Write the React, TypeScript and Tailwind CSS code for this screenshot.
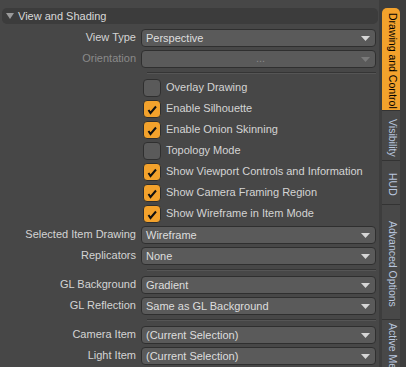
import React from "react";

const font = { fontFamily: '"Liberation Sans", Arial, sans-serif' };

function Arrow({ dim }: { dim?: boolean }) {
    return (
        <svg width="9" height="6" viewBox="0 0 9 6" className="absolute right-[5px] top-[6px]">
            <path d="M0 0 L9 0 L4.5 5 Z" fill={dim ? "#7a7a7a" : "#d6d6d6"} />
        </svg>
    );
}

function Row({ label, children, dim }: { label?: string; children: React.ReactNode; dim?: boolean }) {
    return (
        <div className="flex items-center h-[21px]">
            <div
                className={
                    "w-[139px] pr-[5px] text-right whitespace-nowrap " + (dim ? "text-[#8a8a8a]" : "text-[#d4d4d4]")
                }
            >
                {label}
            </div>
            <div className="flex-1 pr-[2px]">{children}</div>
        </div>
    );
}

function Select({ value, dim }: { value: string; dim?: boolean }) {
    return (
        <div className="relative h-[18px] rounded-[4px] bg-[#5a5a5a] border border-[#2f2f2f] pl-[4px] leading-[16px] text-[#dedede] whitespace-nowrap">
            {dim ? <div className="text-center text-[#8a8a8a] leading-[14px]">...</div> : value}
            <Arrow dim={dim} />
        </div>
    );
}

function Check({ label, on }: { label: string; on?: boolean }) {
    return (
        <div className="flex items-center h-[21px] pl-[141px]">
            <div
                className={
                    "w-[18px] h-[18px] shrink-0 rounded-[4px] border border-[#2f2f2f] flex items-center justify-center " +
                    (on ? "bg-[#f3a22c]" : "bg-[#5a5a5a]")
                }
            >
                {on && (
                    <svg width="12" height="12" viewBox="0 0 12 12">
                        <path d="M2.5 7 L4.5 10 L10 3.5" stroke="#111" strokeWidth="2" fill="none" />
                    </svg>
                )}
            </div>
            <span className="ml-[5px] text-[#d4d4d4] whitespace-nowrap">{label}</span>
        </div>
    );
}

function Sep() {
    return (
        <div className="h-[8px] flex items-center pl-[145px] pr-[2px]">
            <div className="h-[2px] w-full bg-[#353535] border-b border-[#555]" />
        </div>
    );
}

function Tab({ label, active, h }: { label: string; active?: boolean; h: number }) {
    return (
        <div
            className={
                "w-[18px] flex justify-center pt-[4px] border-b border-[#333] text-[10.5px] whitespace-nowrap overflow-hidden [writing-mode:vertical-rl] " +
                (active ? "bg-[#f3a22c] text-black rounded-t-[5px]" : "bg-[#484848] text-[#b9c6de]")
            }
            style={{ height: h }}
        >
            {label}
        </div>
    );
}

export default function App() {
    return (
        <div className="flex w-[406px] h-[367px] bg-[#3d3d3d] overflow-hidden text-[11px]" style={font}>
            <div className="w-[379px] bg-[#474747] pt-[8px] pl-[2px] pr-[1px]">
                <div className="flex items-center h-[16px] rounded-[5px] bg-[#3c3c3c] text-[#d8d8d8] mb-[3px]">
                    <svg width="8" height="6" viewBox="0 0 8 6" className="ml-[4px] mr-[4px]">
                        <path d="M0 0 L8 0 L4 6 Z" fill="#9a9a9a" />
                    </svg>
                    View and Shading
                </div>
                <Row label="View Type">
                    <Select value="Perspective" />
                </Row>
                <Row label="Orientation" dim>
                    <Select value="" dim />
                </Row>
                <Sep />
                <Check label="Overlay Drawing" />
                <Check label="Enable Silhouette" on />
                <Check label="Enable Onion Skinning" on />
                <Check label="Topology Mode" />
                <Check label="Show Viewport Controls and Information" on />
                <Check label="Show Camera Framing Region" on />
                <Check label="Show Wireframe in Item Mode" on />
                <Row label="Selected Item Drawing">
                    <Select value="Wireframe" />
                </Row>
                <Row label="Replicators">
                    <Select value="None" />
                </Row>
                <Sep />
                <Row label="GL Background">
                    <Select value="Gradient" />
                </Row>
                <Row label="GL Reflection">
                    <Select value="Same as GL Background" />
                </Row>
                <Sep />
                <Row label="Camera Item">
                    <Select value="(Current Selection)" />
                </Row>
                <Row label="Light Item">
                    <Select value="(Current Selection)" />
                </Row>
            </div>
            <div className="flex-1 pt-[8px] pl-[3px] bg-[#3d3d3d]">
                <div className="flex flex-col">
                    <Tab label="Drawing and Control" active h={103} />
                    <Tab label="Visibility" h={50} />
                    <Tab label="HUD" h={44} />
                    <Tab label="Advanced Options" h={115} />
                    <Tab label="Active Mesh" h={60} />
                </div>
            </div>
        </div>
    );
}
